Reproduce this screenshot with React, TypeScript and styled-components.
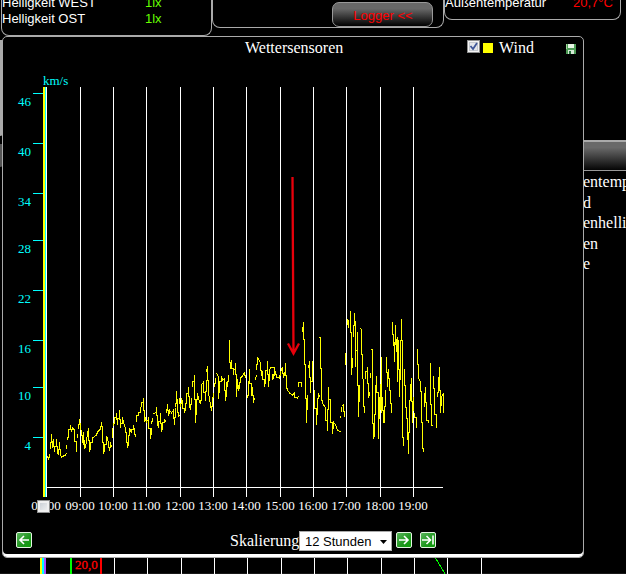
import React from 'react';
import styled, { createGlobalStyle } from 'styled-components';

const GlobalStyle = createGlobalStyle`
  body { margin: 0; background: #000; overflow: hidden; }
  * { box-sizing: border-box; }
`;

const Page = styled.div`
  position: relative;
  width: 626px;
  height: 574px;
  overflow: hidden;
  background: #000;
  color: #fff;
  font: 16px/20px 'Liberation Serif', serif;
  display: flex;
  flex-direction: column;
`;

const TopRow = styled.div`
  display: flex;
  align-items: flex-start;
  height: 36px;
  padding-left: 1px;
  font: 13px/16px 'Liberation Sans', sans-serif;
`;

const Panel = styled.section<{ $width: number; $height: number; $bottom: number }>`
  display: flex;
  flex-direction: column;
  justify-content: flex-end;
  flex: none;
  width: ${(p) => p.$width}px;
  height: ${(p) => p.$height}px;
  padding-bottom: ${(p) => p.$bottom}px;
  border: 1px solid #aaa;
  border-top: 0;
  border-radius: 0 0 8px 8px;
`;

const Reading = styled.div<{ $labelWidth: number }>`
  display: grid;
  grid-template-columns: ${(p) => p.$labelWidth}px auto;
  flex: none;
  height: 16px;
  white-space: nowrap;
`;

const Value = styled.span<{ $color: string }>`
  color: ${(p) => p.$color};
`;

const LoggerButton = styled.button`
  align-self: flex-end;
  width: 101px;
  height: 25px;
  margin-right: 10px;
  padding: 3px 0 0 1px;
  border: 1px solid #999;
  border-radius: 7px;
  background: linear-gradient(#686868 25%, #000);
  color: #f00;
  font: 13px/16px 'Liberation Sans', sans-serif;
`;

const Middle = styled.div`
  display: flex;
  justify-content: space-between;
  height: 522px;
`;

const LeftEdge = styled.div`
  width: 3px;
  display: flex;
  flex-direction: column;
  padding-top: 4px;
  gap: 8px;
`;

const EdgeBar = styled.div<{ $height: number; $color: string }>`
  height: ${(p) => p.$height}px;
  background: ${(p) => p.$color};
  border-radius: 0 0 3px 0;
`;

const Legend = styled.aside`
  width: 43px;
  padding-top: 104px;
  overflow: hidden;
`;

const LegendHeader = styled.div`
  height: 31px;
  border-top: 2px solid #aaa;
  border-bottom: 1px solid #999;
  background: linear-gradient(#696969 20%, #050505);
`;

const LegendItem = styled.div`
  height: 20.6px;
  line-height: 22px;
  white-space: nowrap;
`;

const BottomSvg = styled.svg`
  display: block;
  flex: none;
`;

const Dialog = styled.div`
  position: absolute;
  left: 2px;
  top: 36px;
  width: 582px;
  height: 522px;
  display: flex;
  flex-direction: column;
  background: #000;
  border: 1px solid #aaa;
  border-radius: 5px;
  box-shadow: inset 0 -3px #fff;
`;

const DialogHeader = styled.header`
  height: 23px;
  display: grid;
  grid-template-columns: 1fr 98px 125px 73px 42px;
  align-items: start;
  padding: 1px 0 0;
`;

const Title = styled.div`
  grid-column: 2;
`;

const SeriesToggle = styled.label`
  grid-column: 4;
  display: flex;
  align-items: flex-start;
`;

const CheckSvg = styled.svg`
  flex: none;
  margin: 2px 3px 0 -1px;
`;

const Swatch = styled.span`
  flex: none;
  width: 10px;
  height: 10px;
  margin: 5px 6px 0 0;
  background: #ff0;
`;

const SaveSvg = styled.svg`
  margin: 6px 0 0 25px;
`;

const ChartWrap = styled.div`
  position: relative;
  height: 460px;
`;

const SliderThumb = styled.div`
  position: absolute;
  left: 34px;
  top: 440px;
  width: 13px;
  height: 13px;
  border: 1px solid #8e8f8f;
  background: linear-gradient(135deg, #c3c9d0, #f6f6f6);
  box-shadow: inset 0 0 0 2px #f0f0f0;
`;

const Footer = styled.footer`
  display: flex;
  align-items: flex-start;
  padding: 11px 0 0 13px;
`;

const NavButton = styled.button<{ $gap?: number }>`
  width: 16px;
  height: 16px;
  margin: 1px 0 0 ${(p) => p.$gap ?? 0}px;
  padding: 0;
  border: 1px solid #e4f5e2;
  border-radius: 2px;
  background: linear-gradient(135deg, #58b65a, #1e961e 60%, #0d9e08);
  svg { display: block; }
`;

const ScaleLabel = styled.span`
  width: 70px;
  margin-left: 198px;
`;

const ScaleSelect = styled.div`
  display: flex;
  align-items: center;
  justify-content: space-between;
  width: 93px;
  height: 20px;
  margin-left: -1px;
  padding: 1px 4px 0 5px;
  border: 1px solid #aaa;
  background: #fff;
  color: #000;
  font: 13px/16px 'Liberation Sans', sans-serif;
`;

const gridX = [46, 80, 113, 146, 180, 213, 246, 280, 313, 346, 380, 413];
const yTicks: [number, number][] = [
  [46, 93], [40, 143], [34, 193], [28, 240], [22, 290], [16, 340], [10, 387], [4, 437],
];
const lowerGridX = [114, 147, 181, 214, 247, 281, 314, 347, 381, 414, 447, 481];

// Wind samples, stored in thirds of a pixel relative to each block's origin.
// "|" marks an interruption in the recording.
const windBlocks = [
  {
    x: 40, y: 370,
    d: '22,258 25,270 28,252|31,236 34,192 37,234 40,208 43,245 48,206 52,250 54,254 58,216 61,255 65,262 76,256 78,250|79,238 79,225|82,210 85,190 90,165 93,185 97,175 104,180 108,245 110,230|112,205 113,192|115,178 119,148 122,172 125,185 127,205 129,225 130,185 134,235 137,232 145,175 149,245 152,225 158,203 168,195 173,185 180,178 184,156 187,180 190,253 193,240 200,200 203,205 206,220 209,243 212,215 215,230|217,205 218,175|221,168 223,150 228,130 231,165 237,121 241,175 246,140 251,158 255,175 258,195 261,235 264,215 269,175 275,190 279,165 283,180 287,200|289,155 290,135 296,135 300,115 304,107 309,85 313,155 316,140 320,160 325,140 331,208 333,175',
  },
  {
    x: 150, y: 330,
    d: '4,282 7,265|10,252 18,245 19,232 21,275 24,295 30,250 33,305 37,285 42,268 47,275|49,248 51,223 55,258 59,240 63,250 69,240 73,285 75,235|76,232 78,205|80,182 83,232 85,258 88,255|89,205 91,230 95,205 98,215 103,250 107,235 110,205 115,172 119,225 122,240 125,205|128,170 132,136 136,278 138,225 141,190 145,207 150,222 153,195 155,165 160,155 165,213 168,150|170,125 173,108 176,190 183,242 187,210 190,190|194,170 196,145|200,128 205,140 206,207 208,165 213,138 217,150 223,148 226,213 228,180 230,155 233,170 236,135|238,30 239,72 242,118 245,90 250,135 255,100 258,165 259,200 263,148 264,182 268,165 271,145 276,138 283,127 287,145|292,205 295,190 299,118 304,198 306,172 311,220 314,205|316,150 318,135|319,120 323,82 330,98',
  },
  {
    x: 260, y: 300,
    d: '0,188 4,228 8,212 12,262 16,235 21,182 25,262 27,215 31,200 42,200 38,240 45,212 50,232 58,235 62,215 68,200 70,235 74,215|76,190 79,260 82,270 88,278 98,285 102,280 104,292 111,295 115,288|115,262 116,245 124,245 125,262|127,95 130,67 132,165 137,215 139,368 142,285|145,205 148,182 150,275 152,278 156,205 157,245 158,182|162,270 169,376 172,305 175,280 178,292|179,112 182,115 184,290 187,310 195,325 202,392 206,262 210,330 217,402 219,367 227,375 233,390 240,397',
  },
  {
    x: 340, y: 300,
    d: '1,355 1,348|4,335 4,322|7,318 10,312 14,350|16,160 17,195|22,57 25,85 25,60|28,32 31,32 33,155 34,225 37,175 38,200|40,112 43,40 46,85 47,200 51,95 53,160 55,350 58,255|62,85 64,90 66,235 69,240 70,295 73,340|76,238 77,225 81,200 84,295 88,275|91,235 91,218|95,148 98,150 98,320 101,418 104,402 106,280 110,228 114,320 115,418 118,290 122,330 124,170 125,340 128,290 131,365 134,365 136,270 137,315|140,172 143,260 146,208 149,262 152,280 155,340|158,67 160,138 163,125 164,185 167,75 168,155 171,112 172,245 175,120 178,290 181,180 183,58 186,180 187,385 190,437|193,208 196,300 200,340 203,370 206,463 208,330 211,270 214,235 217,370 220,290|223,340 229,360 230,385|233,148 236,235 241,245 243,300 247,430 250,455|253,320 253,280|257,262 260,350 265,368|268,190 271,190 272,250 274,375 278,378|281,227 284,300 289,385 290,350|293,290 295,262 298,200 301,340 304,290 307,285 310,282 311,340',
  },
];

function toStepPath(run: string, originX: number, originY: number) {
  const points = run.split(' ').map((p) => {
    const [px, py] = p.split(',').map(Number);
    return [Math.floor(originX + px / 3) + 0.5, Math.round(originY + py / 3)];
  });
  return points
    .map(([x, y], i) => {
      if (i === 0) return `M${x} ${y}`;
      const [prevX, prevY] = points[i - 1];
      const narrow = x - prevX <= 2 && Math.abs(y - prevY) > 5;
      if (!narrow) return `L${x} ${y}`;
      const middle = Math.round((y + prevY) / 2);
      return `V${middle}H${x}V${y}`;
    })
    .join('');
}

function WindSeries() {
  return (
    <g stroke="#ff0" strokeWidth="1" fill="none" shapeRendering="crispEdges">
      {windBlocks.flatMap((block) =>
        block.d.split('|').map((run, i) => (
          <path key={`${block.x}-${i}`} d={toStepPath(run, block.x, block.y)} />
        )),
      )}
    </g>
  );
}

function WindChart() {
  return (
    <svg width="580" height="460" viewBox="3 60 580 460" display="block">
      <g fontFamily="Liberation Serif, serif" fontSize="13">
        <g fill="#0ff">
          <text x="43" y="85">km/s</text>
          {yTicks.map(([label, y]) => (
            <text key={label} x="31" y={y + 13} textAnchor="end">{label}</text>
          ))}
        </g>
        <g fill="#fff" textAnchor="middle">
          {gridX.map((x, i) => (
            <text key={x} x={x} y="510">{`${String(i + 8).padStart(2, '0')}:00`}</text>
          ))}
        </g>
      </g>
      <g shapeRendering="crispEdges">
        {gridX.map((x) => (
          <rect key={x} x={x} y="87" width="1" height="410" fill="#fff" />
        ))}
        <rect x="43" y="487" width="400" height="1" fill="#fff" />
        {yTicks.map(([label, y]) => (
          <rect key={label} x="33" y={y} width="10" height="1" fill="#0ff" />
        ))}
        <rect x="43" y="87" width="2" height="410" fill="#ff0" />
        <rect x="45" y="87" width="1" height="410" fill="#0ff" />
      </g>
      <WindSeries />
      <path d="M292.5 177 L293.5 353 M288 343.5 L293.5 353.5 L299 343.5" fill="none" stroke="#e8000b" strokeWidth="2.3" />
    </svg>
  );
}

const arrowPaths = {
  back: 'M12 7H3M7 3L3 7L7 11',
  forward: 'M2 7H11M7 3L11 7L7 11',
  end: 'M1 7H9M5.5 3L9.5 7L5.5 11M12 2.5V11.5',
};

function Arrow({ kind }: { kind: keyof typeof arrowPaths }) {
  return (
    <svg width="14" height="14" viewBox="0 0 14 14">
      <path d={arrowPaths[kind]} fill="none" stroke="#fff" strokeWidth="1.6" />
    </svg>
  );
}

function LowerChart() {
  return (
    <BottomSvg width="626" height="16" viewBox="0 558 626 16">
      <g shapeRendering="crispEdges">
        <rect x="0" y="573" width="626" height="1" fill="#181818" />
        <rect x="40" y="558" width="2" height="16" fill="#ff0" />
        <rect x="42" y="558" width="2" height="16" fill="#0ff" />
        <rect x="44" y="558" width="2" height="16" fill="#a64dff" />
        <rect x="70" y="558" width="2" height="16" fill="#0f0" />
        <rect x="100" y="558" width="2" height="16" fill="#f00" />
        {lowerGridX.map((x) => (
          <rect key={x} x={x} y="558" width="1" height="16" fill="#fff" />
        ))}
        <path d="M435.5 558L445 574" stroke="#0f0" />
      </g>
      <text x="75" y="569" fill="#f00" fontSize="13" fontFamily="Liberation Serif, serif" stroke="#f00" strokeWidth=".3">20,0</text>
    </BottomSvg>
  );
}

export default function App() {
  return (
    <>
      <GlobalStyle />
      <Page>
        <TopRow>
          <Panel $width={211} $height={36} $bottom={8}>
            <Reading $labelWidth={143}><span>Helligkeit WEST</span><Value $color="#6f0">1lx</Value></Reading>
            <Reading $labelWidth={143}><span>Helligkeit OST</span><Value $color="#6f0">1lx</Value></Reading>
          </Panel>
          <Panel $width={232} $height={28} $bottom={0}>
            <LoggerButton>Logger &lt;&lt;</LoggerButton>
          </Panel>
          <Panel $width={177} $height={20} $bottom={8}>
            <Reading $labelWidth={128}><span>Außentemperatur</span><Value $color="#f00">20,7°C</Value></Reading>
          </Panel>
        </TopRow>
        <Middle>
          <LeftEdge>
            <EdgeBar $height={96} $color="#aaa" />
            <EdgeBar $height={23} $color="#555" />
          </LeftEdge>
          <Legend>
            <LegendHeader />
            {['entemperatur', 'd', 'enhelligkeit', 'en', 'e'].map((name) => (
              <LegendItem key={name}>{name}</LegendItem>
            ))}
          </Legend>
        </Middle>
        <LowerChart />
        <Dialog>
          <DialogHeader>
            <Title>Wettersensoren</Title>
            <SeriesToggle>
              <CheckSvg width="13" height="13" viewBox="0 0 13 13">
                <rect x=".5" y=".5" width="12" height="12" fill="#f4f4f4" stroke="#8e8f8f" />
                <rect x="2.5" y="2.5" width="8" height="8" fill="#e3e6ea" stroke="#c5c9ce" />
                <path d="M3.5 6L6 9L10 3" fill="none" stroke="#3f5798" strokeWidth="1.8" />
              </CheckSvg>
              <Swatch />
              <span>Wind</span>
            </SeriesToggle>
            <SaveSvg width="10" height="10" viewBox="0 0 10 10">
              <rect width="10" height="10" fill="#4e9d57" />
              <rect x="2" width="6" height="4" fill="#e9f7e6" />
              <rect x="2" y="6" width="6" height="4" fill="#d5e9d5" />
              <rect x="3" y="7" width="2" height="3" fill="#24733a" />
              <rect width="1" height="5" fill="#a0d89b" />
            </SaveSvg>
          </DialogHeader>
          <ChartWrap>
            <WindChart />
            <SliderThumb />
          </ChartWrap>
          <Footer>
            <NavButton aria-label="Zurück"><Arrow kind="back" /></NavButton>
            <ScaleLabel>Skalierung</ScaleLabel>
            <ScaleSelect>
              12 Stunden
              <svg width="7" height="4" viewBox="0 0 7 4"><path d="M0 0H7L3.5 4Z" /></svg>
            </ScaleSelect>
            <NavButton $gap={4} aria-label="Vor"><Arrow kind="forward" /></NavButton>
            <NavButton $gap={8} aria-label="Ende"><Arrow kind="end" /></NavButton>
          </Footer>
        </Dialog>
      </Page>
    </>
  );
}
